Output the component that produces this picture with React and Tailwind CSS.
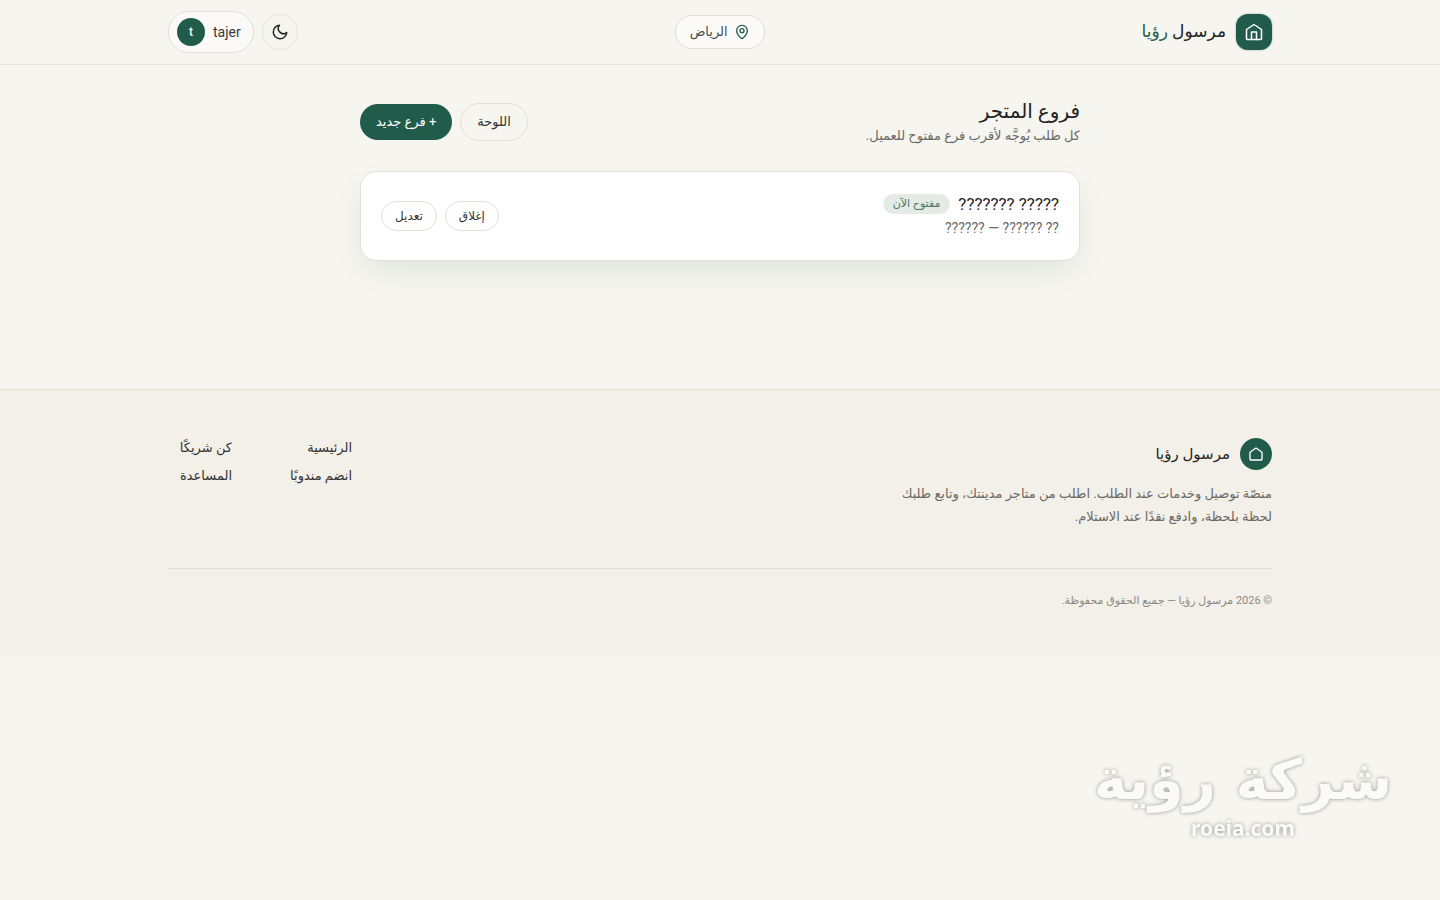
import { MapPin } from 'lucide-react';

const branches = [
  { id: 1, name: '????? ???????', address: '?? ?????? — ??????', open: true },
];

const footerLinks = [
  { label: 'الرئيسية', href: '#home' },
  { label: 'كن شريكًا', href: '#partner' },
  { label: 'انضم مندوبًا', href: '#courier' },
  { label: 'المساعدة', href: '#help' },
];

function StoreIcon({ className }) {
  return (
    <svg viewBox="0 0 24 24" fill="none" stroke="currentColor" strokeWidth="1.8" strokeLinecap="round" strokeLinejoin="round" className={className}>
      <path d="M3 9 12 3l9 6v11a1 1 0 0 1-1 1H4a1 1 0 0 1-1-1z" />
      <path d="M9 21v-9h6v9" />
    </svg>
  );
}

function MoonIcon({ className }) {
  return (
    <svg viewBox="0 0 24 24" fill="none" stroke="currentColor" strokeWidth="2" strokeLinecap="round" strokeLinejoin="round" className={className}>
      <path d="M21 12.8A9 9 0 1 1 11.2 3a7 7 0 0 0 9.8 9.8z" />
    </svg>
  );
}

function Header() {
  return (
    <header className="border-b border-[#e8e4d6]">
      <div className="max-w-6xl mx-auto px-6 h-16 flex items-center justify-between">
        <a href="#home" className="flex items-center gap-2.5">
          <span className="size-9 rounded-xl bg-[#215c4b] text-white flex items-center justify-center shadow-[0_0_2px_rgba(33,92,75,0.5)]">
            <StoreIcon className="size-5" />
          </span>
          <span className="text-[17px] text-[#242424] whitespace-nowrap">
            مرسول <span className="text-[#215c4b]">رؤيا</span>
          </span>
        </a>

        <button className="flex items-center gap-1.5 h-[34px] px-3.5 rounded-full border border-[#e3dfd0] bg-[#fbfaf8] text-[13px] text-[#4a4a48]">
          <MapPin className="size-4 text-[#215c4b]" />
          الرياض
        </button>

        <div className="flex items-center gap-2">
          <button aria-label="الوضع الليلي" className="size-9 rounded-full border border-[#e3dfd0] flex items-center justify-center text-[#242424]">
            <MoonIcon className="size-[18px]" />
          </button>
          <button className="flex items-center gap-2 h-[42px] ps-3 pe-2 rounded-full border border-[#e3dfd0] bg-[#fbfaf8] text-sm text-[#3a3a38]">
            tajer
            <span className="size-7 rounded-full bg-[#215c4b] text-white text-xs font-medium flex items-center justify-center">t</span>
          </button>
        </div>
      </div>
    </header>
  );
}

function BranchCard({ branch }) {
  return (
    <li className="flex items-center justify-between gap-4 p-5 rounded-2xl border border-[#e3dfd3] bg-white shadow-[0_12px_32px_-8px_rgba(33,92,75,0.14)]">
      <div>
        <div className="flex items-center gap-2">
          <h2 className="text-[17px] leading-6 text-[#242424]">{branch.name}</h2>
          {branch.open && (
            <span className="px-2.5 h-5 rounded-full bg-[#e4ebe4] text-[11px] leading-5 text-[#4a7568]">مفتوح الآن</span>
          )}
        </div>
        <p className="text-sm leading-6 text-[#6b6a66]">{branch.address}</p>
      </div>
      <div className="flex gap-2">
        <button className="h-[30px] px-[13px] rounded-full border border-[#e3dfd3] text-xs text-[#333]">إغلاق</button>
        <button className="h-[30px] px-[13px] rounded-full border border-[#e3dfd3] text-xs text-[#333]">تعديل</button>
      </div>
    </li>
  );
}

function Footer() {
  return (
    <footer className="border-t border-[#e1ddd2] bg-[#f3efe9]">
      <div className="max-w-6xl mx-auto px-6 py-12">
        <div className="flex items-start justify-between">
          <div className="max-w-96">
            <div className="flex items-center gap-2.5">
              <span className="size-8 rounded-full bg-[#215c4b] text-white flex items-center justify-center">
                <svg viewBox="0 0 24 24" fill="none" stroke="currentColor" strokeWidth="2" strokeLinejoin="round" className="size-4">
                  <path d="M3 9.5 12 3l9 6.5V20a1 1 0 0 1-1 1H4a1 1 0 0 1-1-1z" />
                </svg>
              </span>
              <span className="text-[15px] text-[#242424]">مرسول رؤيا</span>
            </div>
            <p className="mt-3 text-[13px] leading-[23px] text-[#6b6a66]">
              منصّة توصيل وخدمات عند الطلب. اطلب من متاجر مدينتك، وتابع طلبك لحظة بلحظة، وادفع نقدًا عند الاستلام.
            </p>
          </div>
          <nav className="grid grid-cols-[64px_64px] gap-x-14 gap-y-2 text-[13px] leading-5 text-[#333]">
            {footerLinks.map((link) => (
              <a key={link.label} href={link.href} className="whitespace-nowrap">{link.label}</a>
            ))}
          </nav>
        </div>
        <p className="mt-10 pt-6 border-t border-[#e1ddd2] text-[11px] leading-4 text-[#8d8a82]">
          © 2026 مرسول رؤيا — جميع الحقوق محفوظة.
        </p>
      </div>
    </footer>
  );
}

export default function App() {
  return (
    <div dir="rtl" lang="ar" className="min-h-screen bg-[#f6f5f0] font-['Roboto','DejaVu_Sans',sans-serif]">
      <Header />
      <main className="max-w-3xl mx-auto px-6 pt-8 pb-32">
        <div className="flex items-center justify-between mb-6">
          <div>
            <h1 className="text-xl leading-7 text-[#242424]">فروع المتجر</h1>
            <p className="text-[13px] leading-[22px] text-[#6b6a66]">كل طلب يُوجَّه لأقرب فرع مفتوح للعميل.</p>
          </div>
          <div className="flex items-center gap-2">
            <a href="#dashboard" className="h-[38px] px-4 rounded-full border border-[#e3dfd0] text-[13px] leading-9 text-[#333]">اللوحة</a>
            <button className="h-9 px-4 rounded-full bg-[#215c4b] text-[13px] text-white">+ فرع جديد</button>
          </div>
        </div>
        <ul className="space-y-4">
          {branches.map((branch) => (
            <BranchCard key={branch.id} branch={branch} />
          ))}
        </ul>
      </main>
      <Footer />

      <div className="fixed right-12 bottom-14 text-center font-bold text-[#fbfaf8] [text-shadow:0_0_4px_rgba(0,0,0,0.4)] pointer-events-none">
        <div className="text-[56px] leading-16 font-['DejaVu_Sans',sans-serif]">شركة رؤية</div>
        <div className="text-[21px] leading-8 font-['Noto_Sans',sans-serif]">roeia.com</div>
      </div>
    </div>
  );
}
